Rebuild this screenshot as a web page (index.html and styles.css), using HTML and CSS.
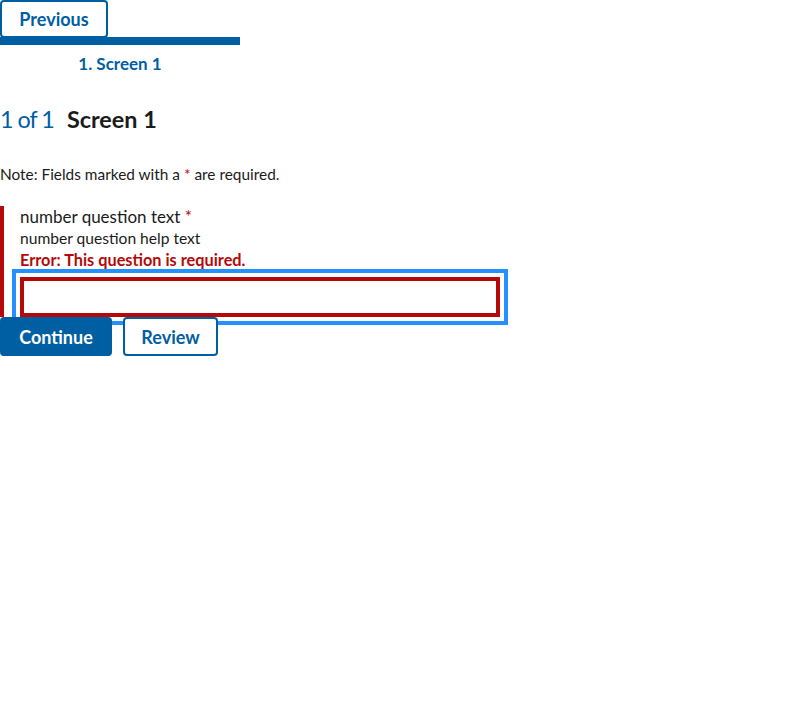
FILE: index.html
```html
<!DOCTYPE html>
<html lang="en">
<head>
<meta charset="utf-8">
<title>Screen 1</title>
<link rel="stylesheet" href="styles.css">
</head>
<body>
<button class="btn btn-outline btn-prev" type="button">Previous</button>
<div class="steps">
  <div class="step-bar"></div>
  <div class="step-label">1. Screen 1</div>
</div>
<h2 class="heading"><span class="counter">1 of 1</span><span class="heading-text">Screen 1</span></h2>
<p class="note">Note: Fields marked with a <span class="req">*</span> are required.</p>
<div class="group-error">
  <label class="label">number question text <span class="req">*</span></label>
  <div class="hint">number question help text</div>
  <div class="error-msg">Error: This question is required.</div>
  <input class="input input-error" type="text">
</div>
<div class="actions">
  <button class="btn btn-primary btn-continue" type="button">Continue</button>
  <button class="btn btn-outline btn-review" type="button">Review</button>
</div>
</body>
</html>
```
FILE: styles.css
```css
body {
  margin: 0;
  font-family: Lato, "Noto Sans", sans-serif;
  color: #1b1b1b;
  background: #fff;
}
.btn {
  font-family: inherit;
  font-weight: 700;
  font-size: 18px;
  line-height: 16px;
  padding: 0;
  text-align: center;
  border-radius: 4px;
  cursor: pointer;
  box-sizing: border-box;
  height: 38px;
}
.btn-outline {
  background: #fff;
  color: #005ea2;
  border: 2px solid #005ea2;
}
.btn-primary {
  background: #005ea2;
  color: #fff;
  border: 2px solid #005ea2;
}
.btn-prev {
  display: block;
  width: 108px;
}
.btn-continue {
  width: 112px;
  height: 39px;
}
.btn-review {
  width: 95px;
  height: 39px;
}
.steps {
  width: 240px;
  margin-top: -1px;
}
.step-bar {
  height: 8px;
  background: #005ea2;
}
.step-label {
  text-align: center;
  color: #005ea2;
  font-weight: 700;
  font-size: 17px;
  line-height: 20px;
  margin-top: 9px;
}
.heading {
  margin: 30px 0 0;
  font-size: 23.4px;
  line-height: 30px;
  font-weight: 700;
  display: flex;
  align-items: baseline;
}
.counter {
  color: #005ea2;
  font-weight: 400;
  letter-spacing: -1px;
  margin-right: 13px;
}
.note {
  margin: 30px 0 0;
  font-size: 15.4px;
  line-height: 20px;
}
.req {
  color: #b50909;
}
.group-error {
  margin-top: 22px;
  border-left: 4px solid #b50909;
  padding-left: 16px;
  display: flex;
  flex-direction: column;
  align-items: flex-start;
}
.label {
  font-size: 17px;
  line-height: 22px;
}
.hint {
  font-size: 15.6px;
  line-height: 21px;
}
.error-msg {
  color: #b50909;
  font-weight: 700;
  font-size: 16.3px;
  line-height: 21px;
}
.input {
  box-sizing: border-box;
  width: 480px;
  height: 40px;
  margin: 7px 0 0;
  font-family: inherit;
  font-size: 17px;
  padding: 8px;
  background: #fff;
}
.input-error {
  border: 4px solid #b50909;
  outline: 4px solid #2491ff;
  outline-offset: 4px;
}
.actions {
  display: flex;
  gap: 11px;
  align-items: flex-start;
}
```
